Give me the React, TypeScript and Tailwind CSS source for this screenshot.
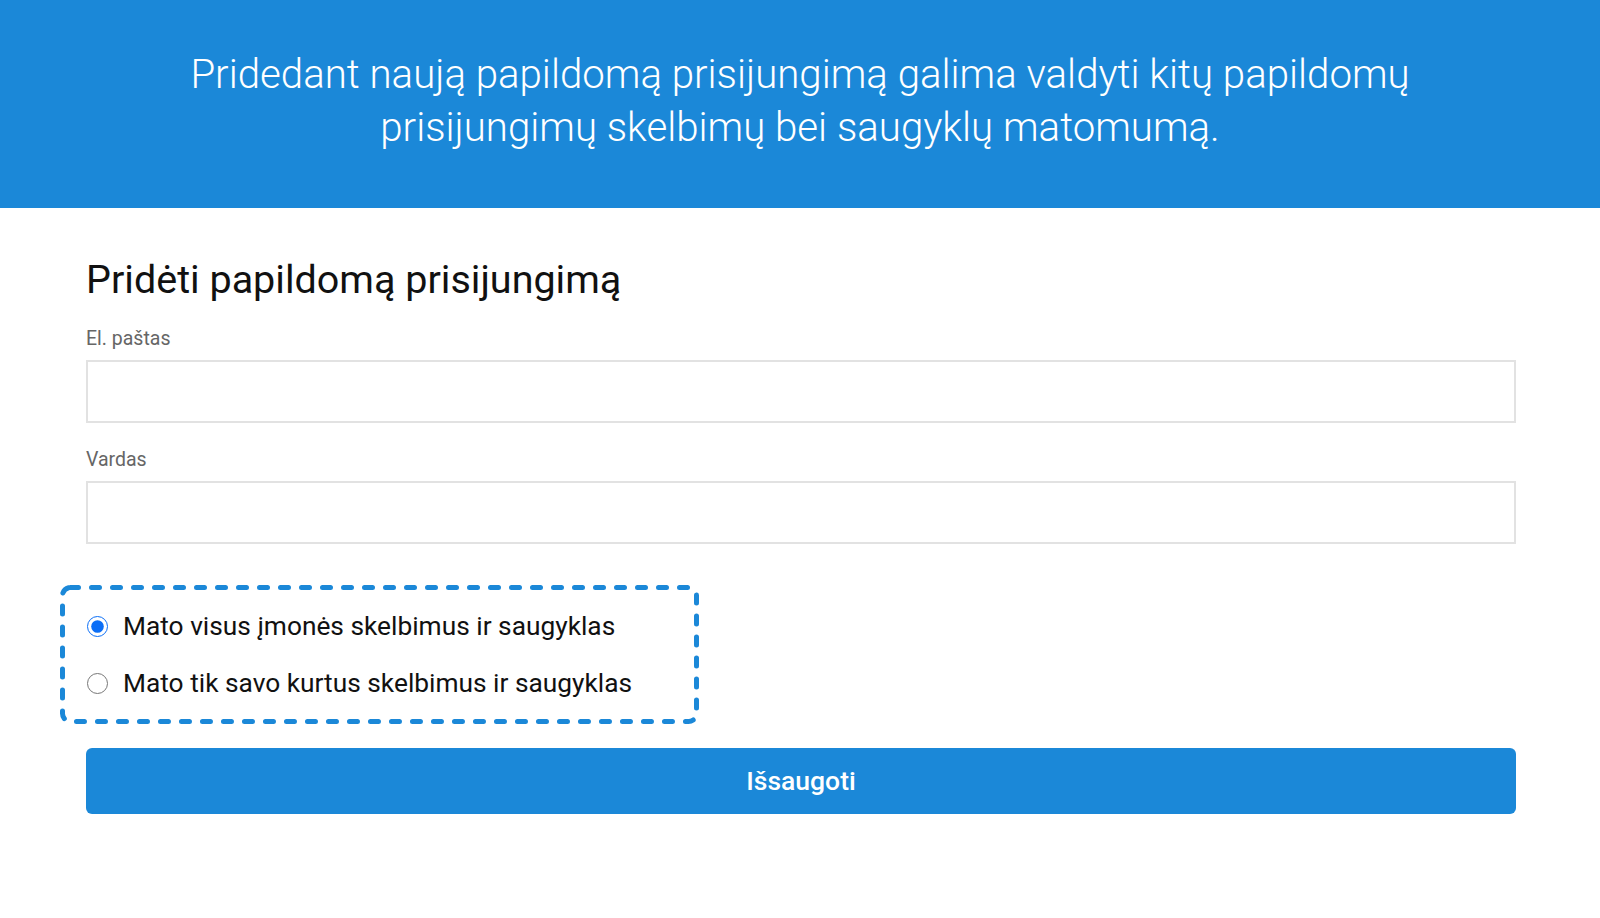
import React, { useState } from 'react';

const font = { fontFamily: 'Roboto, "Noto Sans", Arial, sans-serif' };

function Field({ label, className }: { label: string; className?: string }) {
  return (
    <div className={className}>
      <label className="block text-[19.5px] leading-[20px] text-[#666666]">{label}</label>
      <input
        type="text"
        className="mt-[11px] block h-[63px] w-full border-2 border-[#e2e2e2] bg-white px-4 text-[20px] outline-none"
      />
    </div>
  );
}

function Choice({
  checked,
  onSelect,
  children,
}: {
  checked: boolean;
  onSelect: () => void;
  children: React.ReactNode;
}) {
  return (
    <label className="flex cursor-pointer items-center gap-[15px]">
      <input
        type="radio"
        name="visibility"
        checked={checked}
        onChange={onSelect}
        className="m-0 h-[21px] w-[21px] accent-[#0b6ef6]"
      />
      <span className="text-[26.3px] leading-[30px] text-[#111111]">{children}</span>
    </label>
  );
}

export default function App() {
  const [scope, setScope] = useState<'all' | 'own'>('all');

  return (
    <div className="min-h-screen bg-white" style={font}>
      <header className="flex h-[208px] items-center justify-center bg-[#1b88d8] pb-[6px]">
        <p className="text-center text-[40.2px] font-light leading-[53px] text-white">
          Pridedant naują papildomą prisijungimą galima valdyti kitų papildomų
          <br />
          prisijungimų skelbimų bei saugyklų matomumą.
        </p>
      </header>

      <main className="ml-[86px] mr-[84px] pt-[50px]">
        <h1 className="text-[39.5px] font-normal leading-[44px] text-[#111111]">
          Pridėti papildomą prisijungimą
        </h1>

        <Field label="El. paštas" className="mt-[27px]" />
        <Field label="Vardas" className="mt-[27px]" />

        {/* dashed highlight around the visibility options */}
        <div className="relative -ml-[26px] mt-[41px] flex h-[139px] w-[639px] flex-col justify-center gap-[27px] pl-[27px]">
          <svg className="pointer-events-none absolute inset-0" width="639" height="139">
            <rect
              x="2.5"
              y="2.5"
              width="634"
              height="134"
              rx="8"
              fill="none"
              stroke="#1b88d8"
              strokeWidth="5"
              strokeDasharray="8 13"
              strokeLinecap="round"
            />
          </svg>
          <Choice checked={scope === 'all'} onSelect={() => setScope('all')}>
            Mato visus įmonės skelbimus ir saugyklas
          </Choice>
          <Choice checked={scope === 'own'} onSelect={() => setScope('own')}>
            Mato tik savo kurtus skelbimus ir saugyklas
          </Choice>
        </div>

        <button
          type="button"
          className="mt-[24px] flex h-[66px] w-full items-center justify-center rounded-[6px] bg-[#1b88d8] text-[26.5px] font-medium text-white"
        >
          Išsaugoti
        </button>
      </main>
    </div>
  );
}
